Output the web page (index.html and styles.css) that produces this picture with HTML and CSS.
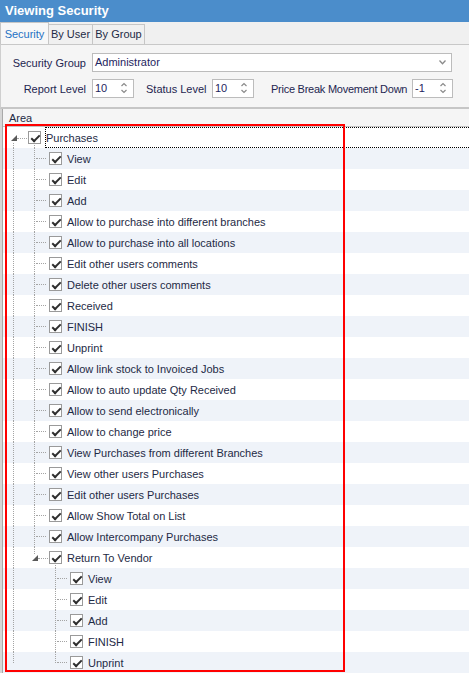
FILE: index.html
```html
<!DOCTYPE html>
<html>
<head>
<meta charset="utf-8">
<link rel="stylesheet" href="styles.css">
</head>
<body>
<div class="window">
  <div class="title">Viewing Security</div>
  <div class="tabs">
    <div class="tab active w1">Security</div>
    <div class="tab w2">By User</div>
    <div class="tab w3">By Group</div>
  </div>
  <div class="panel">
    <div class="frow r1">
      <span class="flabel first">Security Group</span>
      <div class="combo"><span class="val">Administrator</span>
        <svg class="chev" width="7" height="5" viewBox="0 0 7 5"><path d="M0.5 0.5 L3.5 3.8 L6.5 0.5" fill="none" stroke="#8a8a8a" stroke-width="1.3"/></svg>
      </div>
    </div>
    <div class="frow r2">
      <span class="flabel first">Report Level</span>
      <div class="spin"><span class="val">10</span>
        <svg class="arr" width="6" height="12" viewBox="0 0 6 12"><path d="M0.5 4 L3 1.5 L5.5 4 M0.5 8 L3 10.5 L5.5 8" fill="none" stroke="#8a8a8a" stroke-width="1.2"/></svg>
      </div>
      <span class="flabel status">Status Level</span>
      <div class="spin"><span class="val">10</span>
        <svg class="arr" width="6" height="12" viewBox="0 0 6 12"><path d="M0.5 4 L3 1.5 L5.5 4 M0.5 8 L3 10.5 L5.5 8" fill="none" stroke="#8a8a8a" stroke-width="1.2"/></svg>
      </div>
      <span class="flabel price">Price Break Movement Down</span>
      <div class="spin narrow"><span class="val">-1</span>
        <svg class="arr" width="6" height="12" viewBox="0 0 6 12"><path d="M0.5 4 L3 1.5 L5.5 4 M0.5 8 L3 10.5 L5.5 8" fill="none" stroke="#8a8a8a" stroke-width="1.2"/></svg>
      </div>
    </div>
  </div>
  <div class="grid">
    <div class="inner">
      <div class="ghead">Area</div>
      <div class="rows">
        <div class="row">
          <span class="g rootexp"><i class="exp"></i></span>
          <span class="c down"><i class="cb"></i></span>
          <span class="txt focus">Purchases</span>
        </div>
        <div class="row alt"><span class="g v"></span><span class="g v t"></span><span class="c"><i class="cb"></i></span><span class="txt">View</span></div>
        <div class="row"><span class="g v"></span><span class="g v t"></span><span class="c"><i class="cb"></i></span><span class="txt">Edit</span></div>
        <div class="row alt"><span class="g v"></span><span class="g v t"></span><span class="c"><i class="cb"></i></span><span class="txt">Add</span></div>
        <div class="row"><span class="g v"></span><span class="g v t"></span><span class="c"><i class="cb"></i></span><span class="txt">Allow to purchase into different branches</span></div>
        <div class="row alt"><span class="g v"></span><span class="g v t"></span><span class="c"><i class="cb"></i></span><span class="txt">Allow to purchase into all locations</span></div>
        <div class="row"><span class="g v"></span><span class="g v t"></span><span class="c"><i class="cb"></i></span><span class="txt">Edit other users comments</span></div>
        <div class="row alt"><span class="g v"></span><span class="g v t"></span><span class="c"><i class="cb"></i></span><span class="txt">Delete other users comments</span></div>
        <div class="row"><span class="g v"></span><span class="g v t"></span><span class="c"><i class="cb"></i></span><span class="txt">Received</span></div>
        <div class="row alt"><span class="g v"></span><span class="g v t"></span><span class="c"><i class="cb"></i></span><span class="txt">FINISH</span></div>
        <div class="row"><span class="g v"></span><span class="g v t"></span><span class="c"><i class="cb"></i></span><span class="txt">Unprint</span></div>
        <div class="row alt"><span class="g v"></span><span class="g v t"></span><span class="c"><i class="cb"></i></span><span class="txt">Allow link stock to Invoiced Jobs</span></div>
        <div class="row"><span class="g v"></span><span class="g v t"></span><span class="c"><i class="cb"></i></span><span class="txt">Allow to auto update Qty Received</span></div>
        <div class="row alt"><span class="g v"></span><span class="g v t"></span><span class="c"><i class="cb"></i></span><span class="txt">Allow to send electronically</span></div>
        <div class="row"><span class="g v"></span><span class="g v t"></span><span class="c"><i class="cb"></i></span><span class="txt">Allow to change price</span></div>
        <div class="row alt"><span class="g v"></span><span class="g v t"></span><span class="c"><i class="cb"></i></span><span class="txt">View Purchases from different Branches</span></div>
        <div class="row"><span class="g v"></span><span class="g v t"></span><span class="c"><i class="cb"></i></span><span class="txt">View other users Purchases</span></div>
        <div class="row alt"><span class="g v"></span><span class="g v t"></span><span class="c"><i class="cb"></i></span><span class="txt">Edit other users Purchases</span></div>
        <div class="row"><span class="g v"></span><span class="g v t"></span><span class="c"><i class="cb"></i></span><span class="txt">Allow Show Total on List</span></div>
        <div class="row alt"><span class="g v"></span><span class="g v t"></span><span class="c"><i class="cb"></i></span><span class="txt">Allow Intercompany Purchases</span></div>
        <div class="row"><span class="g v"></span><span class="g subexp"><i class="exp"></i></span><span class="c down"><i class="cb"></i></span><span class="txt">Return To Vendor</span></div>
        <div class="row alt"><span class="g v"></span><span class="g"></span><span class="g v t"></span><span class="c"><i class="cb"></i></span><span class="txt">View</span></div>
        <div class="row"><span class="g v"></span><span class="g"></span><span class="g v t"></span><span class="c"><i class="cb"></i></span><span class="txt">Edit</span></div>
        <div class="row alt"><span class="g v"></span><span class="g"></span><span class="g v t"></span><span class="c"><i class="cb"></i></span><span class="txt">Add</span></div>
        <div class="row"><span class="g v"></span><span class="g"></span><span class="g v t"></span><span class="c"><i class="cb"></i></span><span class="txt">FINISH</span></div>
        <div class="row alt"><span class="g v half"></span><span class="g"></span><span class="g v half t"></span><span class="c"><i class="cb"></i></span><span class="txt">Unprint</span></div>
      </div>
    </div>
    <div class="annot"></div>
  </div>
</div>
</body>
</html>
```

FILE: styles.css
```css
html, body {
  margin: 0;
  padding: 0;
}
body {
  width: 469px;
  height: 673px;
  overflow: hidden;
  background: #f0f0f0;
  font-family: "Liberation Sans", Arial, sans-serif;
  font-size: 11px;
  color: #1e2a45;
}
.window {
  width: 469px;
  height: 673px;
  display: flex;
  flex-direction: column;
}
.title {
  height: 22px;
  flex: none;
  background: #4b8dcb;
  color: #ffffff;
  font-weight: bold;
  font-size: 13px;
  line-height: 21px;
  padding-left: 5px;
  box-sizing: border-box;
}
.tabs {
  height: 22px;
  flex: none;
  display: flex;
  align-items: flex-end;
  background: #f0f0f0;
}
.tab {
  box-sizing: border-box;
  height: 20px;
  border: 1px solid #c6c6c6;
  border-bottom: none;
  background: #f0f0f0;
  line-height: 19px;
  text-align: center;
  color: #1e2a45;
  margin-right: -1px;
}
.tab.active {
  height: 22px;
  line-height: 22px;
  background: #f7f7f7;
  color: #1f72c4;
  position: relative;
  z-index: 1;
}
.w1 { width: 49px; }
.w2 { width: 45px; }
.w3 { width: 53px; }
.panel {
  flex: none;
  box-sizing: border-box;
  height: 65px;
  background: #f5f5f5;
  border-top: 1px solid #c8c8c8;
  border-left: 1px solid #cfcfcf;
  border-bottom: 2px solid #c6c6c6;
  padding-top: 8px;
}
.frow {
  display: flex;
  align-items: center;
  height: 19px;
}
.r2 {
  margin-top: 7px;
}
.flabel {
  white-space: nowrap;
  color: #1e2550;
  line-height: 20px;
}
.flabel.first {
  width: 85px;
  text-align: right;
  margin-right: 6px;
}
.flabel.status {
  width: 61px;
  margin-left: 12px;
  margin-right: 5px;
}
.flabel.price {
  width: 136px;
  margin-left: 17px;
  margin-right: 5px;
  letter-spacing: -0.25px;
}
.combo, .spin {
  position: relative;
  box-sizing: border-box;
  height: 19px;
  background: #ffffff;
  border: 1px solid #bcbcbc;
  line-height: 17px;
  color: #1e2560;
}
.combo {
  width: 360px;
}
.spin {
  width: 42px;
}
.spin.narrow {
  width: 41px;
}
.val {
  padding-left: 2px;
}
.chev {
  position: absolute;
  right: 5px;
  top: 6px;
}
.arr {
  position: absolute;
  right: 6px;
  top: 2px;
}
.grid {
  position: relative;
  flex: 1;
  border-left: 2px solid #d6d6d6;
  overflow: hidden;
}
.inner {
  border-left: 1px solid #a9a9a9;
  height: 100%;
  background: #ffffff;
}
.ghead {
  height: 18px;
  box-sizing: border-box;
  background: #f5f5f5;
  border-bottom: 1px solid #c4c4c4;
  padding-left: 6px;
  line-height: 19px;
  color: #1e2a45;
}
.row {
  display: flex;
  height: 21px;
  background: #ffffff;
}
.row.alt {
  background: #eff3f9;
}
.g, .c {
  position: relative;
  flex: none;
  width: 21px;
  height: 21px;
}
.g.v::before {
  content: "";
  position: absolute;
  left: 10px;
  top: 0;
  bottom: 0;
  border-left: 1px dotted #a4a4a4;
}
.g.v.half::before {
  bottom: 10px;
}
.g.t::after {
  content: "";
  position: absolute;
  left: 12px;
  width: 10px;
  top: 10px;
  border-top: 1px dotted #a4a4a4;
}
.rootexp::before {
  content: "";
  position: absolute;
  left: 10px;
  top: 16px;
  bottom: 0;
  border-left: 1px dotted #a4a4a4;
}
.rootexp::after, .subexp::after {
  content: "";
  position: absolute;
  left: 14px;
  width: 10px;
  top: 11px;
  border-top: 1px dotted #a4a4a4;
}
.subexp::before {
  content: "";
  position: absolute;
  left: 10px;
  top: 0;
  height: 7px;
  border-left: 1px dotted #a4a4a4;
}
.exp {
  position: absolute;
  left: 8px;
  top: 8px;
  width: 0;
  height: 0;
  border-left: 6px solid transparent;
  border-bottom: 6px solid #595959;
}
.c.down::before {
  content: "";
  position: absolute;
  left: 10px;
  top: 18px;
  bottom: 0;
  border-left: 1px dotted #a4a4a4;
}
.cb {
  position: absolute;
  left: 4px;
  top: 4px;
  width: 13px;
  height: 13px;
  box-sizing: border-box;
  border: 1px solid #9a9a9a;
  background: #ffffff;
}
.cb::after {
  content: "";
  position: absolute;
  left: 3.5px;
  top: 0.5px;
  width: 3px;
  height: 7px;
  border: solid #2e2e2e;
  border-width: 0 2px 2px 0;
  transform: rotate(45deg);
}
.txt {
  padding-left: 1px;
  line-height: 22px;
  white-space: nowrap;
  color: #1e2a45;
}
.txt.focus {
  flex: 1;
  box-sizing: border-box;
  border: 1px dotted #000000;
  line-height: 20px;
  padding-left: 0;
  margin-right: -6px;
}
.annot {
  position: absolute;
  left: 3px;
  top: 15px;
  width: 340px;
  height: 548px;
  box-sizing: border-box;
  border: 2px solid #ff0000;
  pointer-events: none;
}
```
